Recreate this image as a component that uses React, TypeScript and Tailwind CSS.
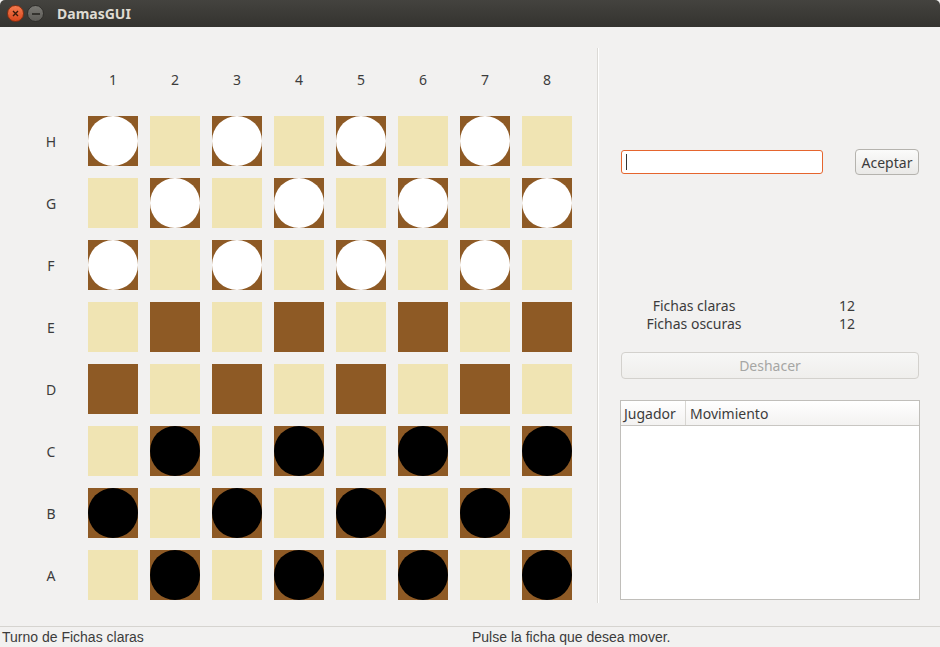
import React from "react";

const rows = ["H", "G", "F", "E", "D", "C", "B", "A"];
const cols = [1, 2, 3, 4, 5, 6, 7, 8];

function Square({ r, c }: { r: number; c: number }) {
  const dark = (r + c) % 2 === 0;
  let piece: null | "white" | "black" = null;
  if (dark && r <= 2) piece = "white";
  if (dark && r >= 5) piece = "black";
  return (
    <div className={`w-[50px] h-[50px] flex items-center justify-center ${dark ? "bg-[#8e5a25]" : "bg-[#f0e4b3]"}`}>
      {piece && (
        <div className={`w-[50px] h-[50px] rounded-full ${piece === "white" ? "bg-white" : "bg-black"}`} />
      )}
    </div>
  );
}

export default function App() {
  return (
    <div
      className="w-[940px] h-[647px] bg-[#f2f1f0] flex flex-col overflow-hidden text-[#3c3c3c]"
      style={{ fontFamily: "'Noto Sans', 'Open Sans', sans-serif" }}
    >
      {/* Title bar */}
      <div className="h-[27px] shrink-0 flex items-center bg-gradient-to-b from-[#44433f] to-[#34332f] rounded-t-[5px]">
        <div className="ml-[7px] w-[17px] h-[17px] rounded-full bg-gradient-to-b from-[#f37a4e] to-[#d9461a] border border-[#8a2f10] flex items-center justify-center">
          <svg width="7" height="7" viewBox="0 0 7 7">
            <path d="M1 1L6 6M6 1L1 6" stroke="#3a1a0a" strokeWidth="1.4" />
          </svg>
        </div>
        <div className="ml-[3px] w-[17px] h-[17px] rounded-full bg-gradient-to-b from-[#7a7974] to-[#5c5b57] border border-[#2f2e2b] flex items-center justify-center">
          <div className="w-[8px] h-[2px] bg-[#34332f]" />
        </div>
        <span
          className="ml-[13px] text-[14px] font-bold text-[#dfdbd2]"
          style={{ fontFamily: "'Noto Sans', sans-serif" }}
        >
          DamasGUI
        </span>
      </div>

      {/* Body */}
      <div className="flex flex-1 min-h-0">
        {/* Board */}
        <div className="pl-[26px] pt-[27px]">
          <div className="grid grid-cols-[repeat(9,50px)] grid-rows-[repeat(9,50px)] gap-[12px]">
            <div />
            {cols.map((c) => (
              <div key={c} className="flex items-center justify-center text-[14px] text-[#3c3c3c]">
                {c}
              </div>
            ))}
            {rows.map((rl, r) => (
              <React.Fragment key={rl}>
                <div className="flex items-center justify-center text-[14px] text-[#3c3c3c]">{rl}</div>
                {cols.map((c, ci) => (
                  <Square key={c} r={r} c={ci} />
                ))}
              </React.Fragment>
            ))}
          </div>
        </div>

        {/* Separator */}
        <div className="ml-[25px] mt-[21px] h-[555px] w-[2px] border-l border-[#dcdad6] bg-white" />

        {/* Right panel */}
        <div className="flex flex-col pl-[22px] pt-[122px] w-[320px]">
          <div className="flex items-center h-[26px]">
            <div className="w-[202px] h-[24px] bg-white border border-[#e5652e] rounded-[3px] flex items-center pl-[4px]">
              <div className="w-px h-[16px] bg-[#333]" />
            </div>
            <button className="ml-[32px] w-[64px] h-[26px] border border-[#b5b3ae] rounded-[4px] bg-gradient-to-b from-[#fbfbfa] to-[#eae9e7] text-[14px] text-[#3c3c3c]">
              Aceptar
            </button>
          </div>

          <div className="mt-[122px] grid grid-cols-[146px_160px] text-[14px] leading-[18px] text-[#3c3c3c]">
            <div className="text-center">Fichas claras</div>
            <div className="text-center">12</div>
            <div className="text-center">Fichas oscuras</div>
            <div className="text-center">12</div>
          </div>

          <div className="mt-[19px] w-[298px] h-[27px] border border-[#d3d1cd] rounded-[4px] bg-gradient-to-b from-[#f7f7f6] to-[#efeeec] flex items-center justify-center text-[14px] text-[#a6a6a4]">
            Deshacer
          </div>

          <div className="mt-[21px] -ml-[1px] w-[300px] h-[200px] border border-[#c0beba] bg-white flex flex-col">
            <div className="h-[25px] flex border-b border-[#c8c6c2] bg-gradient-to-b from-[#ffffff] to-[#f3f2f1] text-[14px] text-[#3c3c3c]">
              <div className="w-[65px] border-r border-[#d8d6d2] pl-[3px] flex items-center">Jugador</div>
              <div className="pl-[4px] flex items-center">Movimiento</div>
            </div>
          </div>
        </div>
      </div>

      {/* Status bar */}
      <div
        className="h-[21px] shrink-0 border-t border-[#d6d4d0] flex items-center pt-[1px] text-[14px] text-[#3c3c3c]"
        style={{ fontFamily: "'Liberation Sans Narrow', 'Liberation Sans', sans-serif" }}
      >
        <div className="w-[472px] pl-[2px]">Turno de Fichas claras</div>
        <div>Pulse la ficha que desea mover.</div>
      </div>
    </div>
  );
}
